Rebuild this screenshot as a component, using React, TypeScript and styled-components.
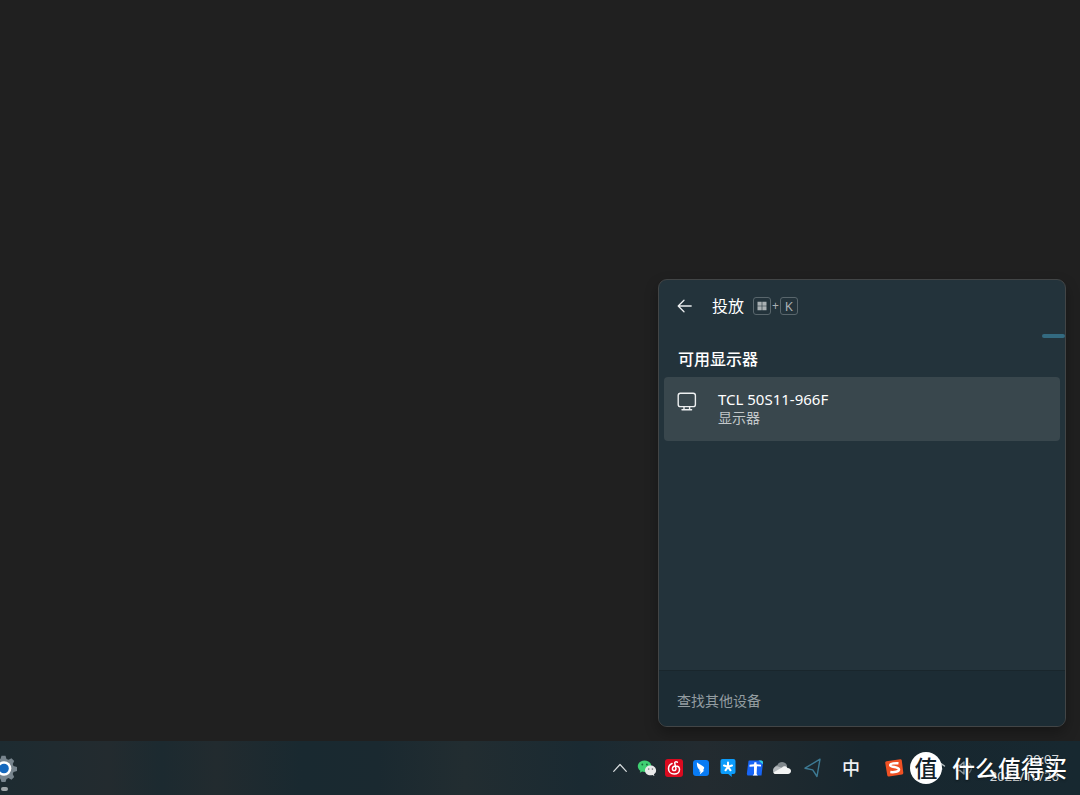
import React from 'react';
import styled, { createGlobalStyle } from 'styled-components';

const GlobalStyle = createGlobalStyle`
  *, *::before, *::after { box-sizing: border-box; }
  body {
    margin: 0;
    background: #202020;
    font-family: "Noto Sans", "Noto Sans CJK SC", sans-serif;
    color: #fff;
  }
  button { font: inherit; color: inherit; background: none; border: 0; padding: 0; }
  svg { display: block; flex: none; }
  h1, h2 { margin: 0; }
`;

const Desktop = styled.div`
  min-height: 100vh;
  display: flex;
  flex-direction: column;
  overflow: hidden;
`;

const Stage = styled.main`
  flex: 1;
  display: flex;
  align-items: flex-end;
  justify-content: flex-end;
  padding: 14px;
`;

const Flyout = styled.section`
  width: 408px;
  max-width: 100%;
  min-height: 448px;
  display: flex;
  flex-direction: column;
  border: 1px solid #424546;
  border-radius: 9px;
  background: #23333b;
  box-shadow: 0 6px 14px rgba(0, 0, 0, 0.3);
  overflow: hidden;
`;

const FlyoutHeader = styled.header`
  height: 54px;
  display: flex;
  align-items: center;
  padding: 0 18px 2px;
`;

const BackButton = styled.button`
  width: 35px;
`;

const Title = styled.h1`
  font-size: 16px;
  line-height: 24px;
  font-weight: 400;
  margin-right: 9px;
`;

const Shortcut = styled.span`
  display: flex;
  align-items: center;
  gap: 1px;
  font-size: 12px;
  line-height: 16px;
  color: #a9b0b3;
`;

const Key = styled.kbd`
  width: 18px;
  height: 18px;
  display: flex;
  align-items: center;
  justify-content: center;
  border: 1px solid #59666c;
  border-radius: 3px;
  font-family: inherit;
  font-size: 13px;
`;

const ProgressTrack = styled.div`
  display: flex;
  justify-content: flex-end;
`;

const ProgressSegment = styled.span`
  width: 23px;
  height: 4px;
  border-radius: 2px;
  background: #336a80;
`;

const SectionTitle = styled.h2`
  padding: 9px 19px 6px;
  font-size: 16px;
  line-height: 24px;
  font-weight: 500;
`;

const DeviceList = styled.div`
  flex: 1;
  padding: 0 5px;
`;

const Device = styled.button`
  width: 100%;
  height: 64px;
  display: flex;
  align-items: flex-start;
  gap: 21px;
  padding: 13px;
  border-radius: 4px;
  background: #39474d;
  text-align: left;
`;

const DeviceText = styled.span`
  display: flex;
  flex-direction: column;
`;

const DeviceName = styled.span`
  font-size: 15px;
  line-height: 18px;
`;

const DeviceKind = styled.span`
  font-size: 14px;
  line-height: 20px;
  color: #c3c8ca;
`;

const FlyoutFooter = styled.footer`
  height: 56px;
  display: flex;
  align-items: center;
  padding: 4px 18px 0;
  border-top: 1px solid #19262c;
  background: #1c2c34;
`;

const FooterLink = styled.a`
  font-size: 14px;
  line-height: 20px;
  color: #939da1;
  text-decoration: none;
`;

const Taskbar = styled.nav`
  position: relative;
  height: 54px;
  display: flex;
  align-items: center;
  justify-content: space-between;
  padding-right: 21px;
  background: linear-gradient(90deg, #1d2b31 0%, #232b2f 10%, #1c2a30 15%, #222b2f 20%, #192930 28%, #1a2930 35%, #222d31 43%, #1a2a32 54%, #232b30 65%, #202a2f 70%, #18272f 80%, #172830 100%);
`;

const TaskbarApp = styled.button`
  width: 18px;
  height: 54px;
  overflow: hidden;
`;

const Tray = styled.div`
  display: flex;
  align-items: center;
  gap: 25px;
`;

const TrayGroup = styled.div<{ $gap: number }>`
  display: flex;
  align-items: center;
  gap: ${(p) => p.$gap}px;
`;

const TrayButton = styled.button`
  width: 18px;
  height: 18px;
  display: flex;
  align-items: center;
  justify-content: center;
`;

const InputMode = styled.button`
  width: 18px;
  font-size: 18px;
  line-height: 24px;
  font-weight: 500;
  color: #eef0f1;
`;

const Clock = styled.button`
  width: 68px;
  text-align: right;
  font-size: 13px;
  line-height: 17px;
  color: #d5dadc;
  white-space: nowrap;
  display: flex;
  flex-direction: column;
  align-items: flex-end;
`;

const Watermark = styled.div`
  position: absolute;
  right: 13px;
  top: 11px;
  display: flex;
  align-items: center;
  gap: 10px;
  pointer-events: none;
`;

const WatermarkBadge = styled.span`
  width: 32px;
  height: 32px;
  display: flex;
  align-items: center;
  justify-content: center;
  border-radius: 50%;
  background: #fff;
  color: #13222a;
  font-size: 23px;
  line-height: 32px;
  font-weight: 500;
`;

const WatermarkText = styled.span`
  font-size: 23px;
  line-height: 32px;
  font-weight: 500;
  white-space: nowrap;
  text-shadow: 0 1px 2px rgba(0, 0, 0, 0.5);
`;

const BackIcon = () => (
  <svg width="16" height="16" viewBox="0 0 16 16" fill="none" stroke="#e9eced" strokeWidth="1.3" strokeLinecap="round" strokeLinejoin="round">
    <path d="M14.200 8H1.400M7 2.200 1.200 8l5.800 5.800" />
  </svg>
);

const WindowsIcon = () => (
  <svg width="10" height="10" viewBox="0 0 10 10" fill="#a9b0b3">
    <path d="M.5.7h4.2v4H.5zM5.3.7h4.2v4H5.3zM.5 5.3h4.2v4H.5zM5.3 5.3h4.2v4H5.3z" />
  </svg>
);

const DisplayIcon = () => (
  <svg width="20" height="22" viewBox="0 -2 20 22" fill="none" stroke="#eef0f1" strokeWidth="1.4" strokeLinecap="round">
    <rect x="1.2" y="1.2" width="17.2" height="13.4" rx="2.2" />
    <path d="M7 15v2.500M12.600 15v2.500M5 17.700h9.600" />
  </svg>
);

const SettingsIcon = () => (
  <svg width="18" height="54" viewBox="0 1 18 54">
    <path
      d="M1.5 15.8h4l1 3.2 2 .8 3-1.6 2.7 2.8-1.5 3 .8 1.9 3.5 1.1v3.900l-3.500 1.100-.8 2 1.500 3-2.700 2.700-3-1.600-2 .9-1 3h-4l-1.100-3.200h-4V19h4z"
      fill="#78858e"
    />
    <circle cx="4" cy="28.500" r="7.300" fill="#fff" />
    <circle cx="4" cy="28.500" r="4.800" fill="#1568bd" />
    <rect x="1" y="47" width="7" height="4" rx="2" fill="#9da4a7" />
  </svg>
);

const ChevronIcon = () => (
  <svg width="16" height="16" viewBox="0 0 16 16" fill="none" stroke="#d9dddf" strokeWidth="1.2" strokeLinecap="round" strokeLinejoin="round">
    <path d="M1.700 11.300 8 4.500l6.300 6.800" />
  </svg>
);

const WeChatIcon = () => (
  <svg width="20" height="18" viewBox="0 0 20 18">
    <path d="M7.600 1.500C3.800 1.500.8 4 .8 7.300c0 1.900 1 3.500 2.600 4.500l-.6 2 2.400-1.200c.8.200 1.500.3 2.400.3 3.700 0 6.700-2.500 6.700-5.700s-3-5.700-6.700-5.700z" fill="#3fd072" />
    <circle cx="5.300" cy="5.500" r=".9" fill="#17663a" />
    <circle cx="9.900" cy="5.500" r=".9" fill="#17663a" />
    <path d="M13.500 6.600c-3.100 0-5.500 2.100-5.500 4.800s2.400 4.800 5.500 4.800c.7 0 1.300-.1 1.900-.300l2 1-.5-1.700c1.400-.9 2.200-2.200 2.200-3.800 0-2.700-2.500-4.800-5.600-4.800z" fill="#e8e9e9" />
    <circle cx="11.700" cy="10.100" r=".8" fill="#777" />
    <circle cx="15.400" cy="10.100" r=".8" fill="#777" />
  </svg>
);

const MusicIcon = () => (
  <svg width="18" height="18" viewBox="0 0 18 18" fill="none">
    <rect width="18" height="18" rx="3" fill="#db0a1f" />
    <path
      d="M12.300 3.200c-1.300-.9-2.800-.3-2.500 1.100l1.100 5c.3 1.400-.6 2.300-1.700 2.300-1.300 0-2-1-1.800-2.200.2-1.500 1.700-2.500 3.300-2.500 2.400 0 3.800 1.600 3.800 3.600 0 2.700-2.300 4.600-5.300 4.600-3.300 0-5.700-2.300-5.700-5.300 0-2.500 1.400-4.500 3.600-5.300"
      stroke="#fff"
      strokeWidth="1.5"
      strokeLinecap="round"
    />
  </svg>
);

const DingIcon = () => (
  <svg width="18" height="18" viewBox="0 0 18 18">
    <rect x="1" y="1" width="16" height="16" rx="3" fill="#087bf4" />
    <path d="M4.900 3.300c1.800 1.700 4.800 3.100 6.400 4.200 1 .7 1.100 1.300.7 2.100l-1 1.800h1.400l-4.600 4.100.8-3H7.200l.5-1.500C5.500 9.500 4.600 6.300 4.900 3.300z" fill="#fff" />
  </svg>
);

const StarChatIcon = () => (
  <svg width="18" height="18" viewBox="0 0 18 18">
    <path d="M3.500 0h11a2 2 0 0 1 2 2v11a2 2 0 0 1-2 2h-1.800v3l-3.500-3H3.500a2 2 0 0 1-2-2V2a2 2 0 0 1 2-2z" fill="#0c9dfc" />
    <path d="M9 7.800V3.600M9 7.800 5 6.500M9 7.800l4-1.300M9 7.800l-2.500 3.500M9 7.800l2.500 3.500" stroke="#fff" strokeWidth="2" strokeLinecap="round" />
  </svg>
);

const TowerIcon = () => (
  <svg width="18" height="18" viewBox="0 0 18 18">
    <path d="M3 1.500h12a2 2 0 0 1 2 2l-1.500 13h-14L.8 15 2.500 2z" fill="#1765f6" />
    <path d="M12.500 1.500H15a2 2 0 0 1 2 2v1.800z" fill="#35d6dd" />
    <path d="M3.500 5.800 8 5.200l.4-2h2l.2 2 4.400.6v1.600l-4-.1-.4 7.700 1.200 1.500H6.700L8 15V7.500l-4.500.3z" fill="#fff" />
  </svg>
);

const CloudIcon = () => (
  <svg width="20" height="18" viewBox="0 0 20 18">
    <path d="M4.500 11.500C2.200 10 2.700 6.500 5.500 5.900 7 2.400 11.700 1.800 14.200 5c.6.800.9 1.600.9 2.700L10 12z" fill="#81898d" />
    <path d="M1 11.500c0-3 2.500-4.700 5-4.100l5 1.800L8 15H4.200C2.400 15 1 13.700 1 11.500z" fill="#b5babd" />
    <path d="M4 15c-1.200 0-2.300-.4-2.700-1.500L10 8.500c1.500-1.700 4.400-1.500 5.500.6 2.200.1 3.500 1.400 3.500 3 0 1.700-1.300 2.900-3 2.900z" fill="#f2f3f3" />
  </svg>
);

const LocationIcon = () => (
  <svg width="18" height="20" viewBox="0 0 18 20" fill="none" stroke="#3d7a94" strokeWidth="1.400" strokeLinejoin="round">
    <path d="M16 1.200 1 10.200l7.700 1.700 4.300 6.600z" />
  </svg>
);

const SogouIcon = () => (
  <svg width="20" height="20" viewBox="0 0 20 20" fill="none">
    <path d="M2.500 3.200 16.200 1.300a1.500 1.500 0 0 1 1.600 1.200l1.500 12.300a1.500 1.500 0 0 1-1.200 1.600L5 18.500A1.500 1.500 0 0 1 3.300 17.400L1.200 4.800A1.500 1.500 0 0 1 2.500 3.200z" fill="#ef5124" />
    <path d="M14.500 5.200c-3-.2-8.300 0-8.300 2 0 2.300 8.800 1.500 8.800 4.300 0 2.400-5.200 2.900-8.700 2.500" stroke="#fff" strokeWidth="2.500" />
  </svg>
);

const WifiIcon = () => (
  <svg width="18" height="18" viewBox="0 0 18 18" fill="none" stroke="#adb6ba" strokeWidth="1.400" strokeLinecap="round">
    <path d="M1.500 7c4.200-4.200 10.800-4.200 15 0M4.200 10c2.700-2.700 6.900-2.700 9.600 0M7 12.800c1.100-1.100 2.900-1.100 4 0" />
  </svg>
);

const VolumeIcon = () => (
  <svg width="20" height="18" viewBox="0 0 20 18" fill="none" stroke="#8b989e" strokeWidth="1.400" strokeLinecap="round" strokeLinejoin="round">
    <path d="M1.500 6.500H5l4-3.500v12l-4-3.500H1.500zM12 6.500c1.200 1.500 1.200 3.500 0 5" />
    <path d="M14.500 4.500c2.300 2.700 2.300 6.300 0 9" stroke="#5c6b72" />
  </svg>
);

const trayApps = [
  { label: '显示隐藏的图标', Icon: ChevronIcon },
  { label: '微信', Icon: WeChatIcon },
  { label: '网易云音乐', Icon: MusicIcon },
  { label: '钉钉', Icon: DingIcon },
  { label: '消息', Icon: StarChatIcon },
  { label: '办公', Icon: TowerIcon },
  { label: 'OneDrive', Icon: CloudIcon },
];

export default function App() {
  return (
    <>
      <GlobalStyle />
      <Desktop>
        <Stage>
          <Flyout>
            <FlyoutHeader>
              <BackButton aria-label="返回"><BackIcon /></BackButton>
              <Title>投放</Title>
              <Shortcut>
                <Key><WindowsIcon /></Key>+<Key>K</Key>
              </Shortcut>
            </FlyoutHeader>
            <ProgressTrack><ProgressSegment /></ProgressTrack>
            <SectionTitle>可用显示器</SectionTitle>
            <DeviceList>
              <Device>
                <DisplayIcon />
                <DeviceText>
                  <DeviceName>TCL 50S11-966F</DeviceName>
                  <DeviceKind>显示器</DeviceKind>
                </DeviceText>
              </Device>
            </DeviceList>
            <FlyoutFooter>
              <FooterLink href="#devices">查找其他设备</FooterLink>
            </FlyoutFooter>
          </Flyout>
        </Stage>
        <Taskbar>
          <TaskbarApp aria-label="设置"><SettingsIcon /></TaskbarApp>
          <Tray>
            <TrayGroup $gap={20}>
              <TrayGroup $gap={13}>
                <TrayGroup $gap={9}>
                  {trayApps.map(({ label, Icon }) => (
                    <TrayButton key={label} aria-label={label}><Icon /></TrayButton>
                  ))}
                </TrayGroup>
                <TrayButton aria-label="位置"><LocationIcon /></TrayButton>
              </TrayGroup>
              <InputMode>中</InputMode>
            </TrayGroup>
            <TrayButton aria-label="搜狗输入法"><SogouIcon /></TrayButton>
            <TrayGroup $gap={17}>
              <TrayGroup $gap={10}>
                <TrayButton aria-label="网络"><WifiIcon /></TrayButton>
                <TrayButton aria-label="音量"><VolumeIcon /></TrayButton>
              </TrayGroup>
              <Clock>
                <span>20:07</span>
                <span>2022/10/26</span>
              </Clock>
            </TrayGroup>
          </Tray>
          <Watermark>
            <WatermarkBadge>值</WatermarkBadge>
            <WatermarkText>什么值得买</WatermarkText>
          </Watermark>
        </Taskbar>
      </Desktop>
    </>
  );
}
